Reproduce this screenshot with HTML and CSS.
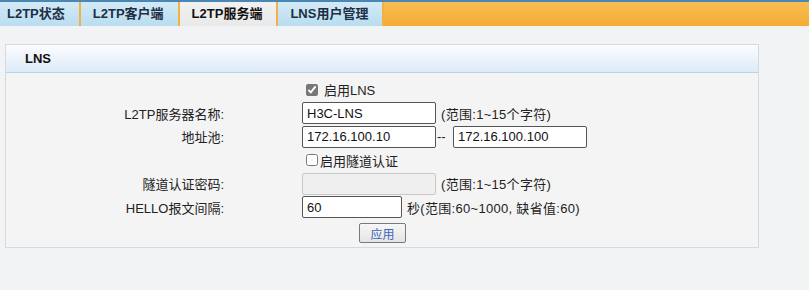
FILE: index.html
```html
<!DOCTYPE html>
<html lang="zh-CN">
<head>
    <meta charset="UTF-8">
    <title>L2TP服务端</title>
    <link rel="stylesheet" href="styles.css">
</head>
<body>
    <div class="tab-bar">
        <div class="tab">L2TP状态</div>
        <div class="tab">L2TP客户端</div>
        <div class="tab active">L2TP服务端</div>
        <div class="tab">LNS用户管理</div>
    </div>

    <div class="panel">
        <div class="panel-header">LNS</div>
        <div class="panel-body">
            <div class="row">
                <span class="label"></span>
                <label class="check"><input type="checkbox" checked> 启用LNS</label>
            </div>
            <div class="row">
                <span class="label">L2TP服务器名称:</span>
                <input type="text" class="field" value="H3C-LNS">
                <span class="hint">(范围:1~15个字符)</span>
            </div>
            <div class="row">
                <span class="label">地址池:</span>
                <input type="text" class="field" value="172.16.100.10">
                <span class="dash">--</span>
                <input type="text" class="field" value="172.16.100.100">
            </div>
            <div class="row">
                <span class="label"></span>
                <label class="check tight"><input type="checkbox">启用隧道认证</label>
            </div>
            <div class="row">
                <span class="label">隧道认证密码:</span>
                <input type="text" class="field" disabled>
                <span class="hint">(范围:1~15个字符)</span>
            </div>
            <div class="row">
                <span class="label">HELLO报文间隔:</span>
                <input type="text" class="field short" value="60">
                <span class="hint">秒(范围:60~1000, 缺省值:60)</span>
            </div>
            <div class="actions">
                <button class="apply-btn">应用</button>
            </div>
        </div>
    </div>
</body>
</html>
```

FILE: styles.css
```css
body {
    margin: 0;
    background-color: #f2f3f5;
    font-family: "Liberation Sans", "Noto Sans CJK SC", sans-serif;
    font-size: 13px;
    color: #222;
}

.tab-bar {
    display: flex;
    height: 24px;
    border-top: 2px solid #4c86b4;
    background: linear-gradient(#f9be52, #f5ab35);
}

.tab {
    padding: 0 14px 0 7px;
    line-height: 24px;
    font-weight: bold;
    color: #1e2e44;
    background: linear-gradient(#d2eaf6, #b9ddf0);
    border-right: 2px solid #f5b040;
}

.tab:nth-child(2) {
    padding-left: 12px;
}

.tab:nth-child(4) {
    padding-left: 12px;
}

.tab.active {
    background: linear-gradient(#f1f1f1, #e9e9ea);
    color: #111;
    padding-left: 12px;
}

.panel {
    width: 752px;
    margin: 18px 0 0 5px;
    border: 1px solid #d6d9de;
    background-color: #f4f4f5;
}

.panel-header {
    height: 27px;
    line-height: 27px;
    padding-left: 19px;
    font-weight: bold;
    color: #111;
    background: linear-gradient(#fbfcfe, #ddebf8);
    border-bottom: 1px solid #b9d2e8;
}

.panel-body {
    padding: 5px 0 0;
}

.row {
    display: flex;
    align-items: center;
    height: 23.5px;
}

.label {
    width: 218px;
    padding-right: 78px;
    text-align: right;
}

.check {
    display: flex;
    align-items: center;
    gap: 6px;
}

.check.tight {
    gap: 2px;
}

.check input {
    width: 12px;
    height: 12px;
    margin: 0 0 0 4px;
    accent-color: #777;
}

.field {
    width: 134px;
    height: 22px;
    box-sizing: border-box;
    border: 1px solid #555;
    border-radius: 2px;
    padding: 0 4px;
    font-family: inherit;
    font-size: 13px;
    color: #111;
    background: white;
}

.field:disabled {
    background: #efefef;
    border-color: #c8c8c8;
}

.field.short {
    width: 100px;
}

.hint {
    margin-left: 5px;
    letter-spacing: 0.3px;
}

.dash {
    width: 16px;
    padding-left: 1px;
}

.actions {
    display: flex;
    height: 28px;
    align-items: center;
    padding-left: 353px;
}

.apply-btn {
    width: 47px;
    height: 20px;
    padding: 0;
    font-family: inherit;
    font-size: 12px;
    color: #3f64b8;
    border: 1px solid #7a7a7a;
    border-radius: 2px;
    background: linear-gradient(#f7f7f7, #e4e4e4);
}
```
